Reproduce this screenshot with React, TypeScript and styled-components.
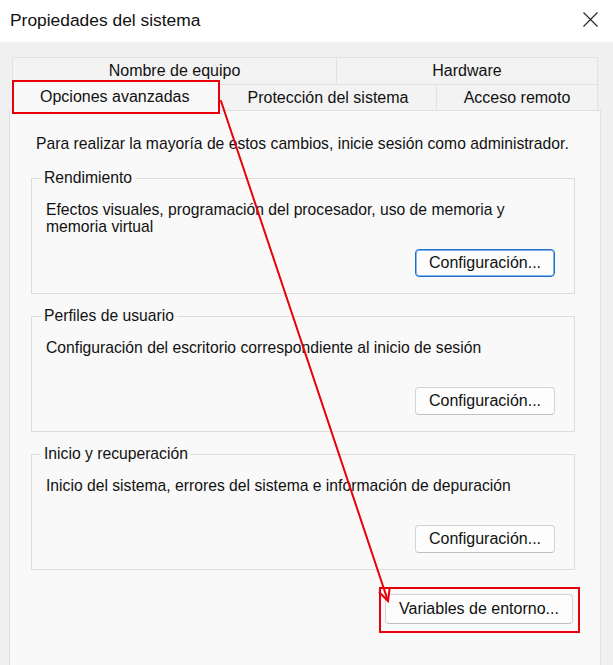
import React from "react";
import styled, { createGlobalStyle, css } from "styled-components";

const GlobalStyle = createGlobalStyle`
  html, body {
    margin: 0;
    padding: 0;
    background: #f0f0f0;
  }
  body {
    font-family: "Liberation Sans", Arial, sans-serif;
    color: #111;
  }
  * { box-sizing: border-box; }
`;

const Window = styled.div`
  position: relative;
  width: 613px;
  height: 665px;
  overflow: hidden;
  display: flex;
  flex-direction: column;
  background: #f0f0f0;
`;

const TitleBar = styled.div`
  height: 42px;
  flex: 0 0 42px;
  background: #ffffff;
  display: flex;
  align-items: center;
  justify-content: space-between;
  padding: 0 15px 2px 10px;
`;

const Title = styled.span`
  font-size: 17.4px;
  color: #111;
`;

const CloseButton = styled.span`
  display: flex;
  width: 16px;
  height: 16px;
  align-items: center;
  justify-content: center;
  margin-bottom: 2px;
`;

const Body = styled.div`
  flex: 1;
  display: flex;
  flex-direction: column;
  padding: 15px 12px 0 9px;
`;

const TabStrip = styled.div`
  display: flex;
  flex-direction: column;
  margin-left: 3px;
  width: 586px;
  position: relative;
  z-index: 2;
`;

const TabRow = styled.div<{ $height: number }>`
  display: flex;
  align-items: flex-end;
  height: ${(p) => p.$height}px;
`;

const redBox = css`
  &::after {
    content: "";
    position: absolute;
    border: 2px solid #e8000b;
    pointer-events: none;
  }
`;

const Tab = styled.div<{ $width: number; $selected?: boolean }>`
  position: relative;
  flex: 0 0 ${(p) => p.$width}px;
  height: 100%;
  display: flex;
  align-items: center;
  justify-content: center;
  font-size: 16px;
  color: #111;
  background: #f3f3f3;
  border: 1px solid #e2e2e2;
  border-bottom: none;
  & + & {
    border-left: none;
  }
  ${(p) =>
    p.$selected &&
    css`
      height: 31px;
      margin-bottom: -1px;
      background: #f9f9f9;
      border-color: #dedede;
      padding-top: 2px;
      z-index: 3;
      justify-content: flex-start;
      padding-left: 27px;
      ${redBox}
      &::after {
        top: -1px;
        left: -1px;
        right: -1px;
        bottom: -3px;
      }
    `}
`;

const Panel = styled.div`
  flex: 1;
  display: flex;
  flex-direction: column;
  background: #f9f9f9;
  border: 1px solid #e0e0e0;
  border-bottom: none;
  padding: 24px 25px 0 21px;
`;

const Intro = styled.p`
  margin: 0 0 0 5px;
  font-size: 15.7px;
  line-height: 17px;
  white-space: nowrap;
`;

const GroupBox = styled.fieldset`
  margin: 13px 0 0 0;
  border: 1px solid #dcdcdc;
  padding: 0 19px 16px 14px;
  min-width: 0;
  &:first-of-type {
    margin-top: 17px;
  }
`;

const Legend = styled.legend`
  margin-left: -5px;
  padding: 0 3px;
  font-size: 15.7px;
  line-height: 18px;
`;

const Description = styled.p`
  margin: 14px 0 0 0;
  font-size: 15.7px;
  line-height: 17px;
  min-height: 34px;
`;

const ButtonRow = styled.div<{ $top: number; $right?: number }>`
  display: flex;
  justify-content: flex-end;
  margin-top: ${(p) => p.$top}px;
  margin-right: ${(p) => p.$right ?? 0}px;
`;

const Button = styled.button<{ $width: number; $height: number; $focused?: boolean; $highlight?: boolean }>`
  position: relative;
  width: ${(p) => p.$width}px;
  height: ${(p) => p.$height}px;
  font-family: "Liberation Sans", Arial, sans-serif;
  font-size: 16px;
  color: #111;
  background: #fdfdfd;
  border: 1px solid #d3d3d3;
  border-bottom-color: #bfbfbf;
  border-radius: 4px;
  padding: 0;
  ${(p) =>
    p.$focused &&
    css`
      border: 1px solid #1d6fcc;
      box-shadow: inset 0 0 0 1px rgba(40, 120, 210, 0.55);
    `}
  ${(p) =>
    p.$highlight &&
    css`
      ${redBox}
      &::after {
        top: -8px;
        left: -7px;
        right: -8px;
        bottom: -10px;
      }
    `}
`;

const ArrowLayer = styled.svg`
  position: absolute;
  left: 0;
  top: 0;
  pointer-events: none;
  z-index: 10;
`;

const groups = [
  {
    title: "Rendimiento",
    text: "Efectos visuales, programación del procesador, uso de memoria y memoria virtual",
    focused: true,
  },
  {
    title: "Perfiles de usuario",
    text: "Configuración del escritorio correspondiente al inicio de sesión",
  },
  {
    title: "Inicio y recuperación",
    text: "Inicio del sistema, errores del sistema e información de depuración",
  },
];

export default function App() {
  return (
    <>
      <GlobalStyle />
      <Window>
        <TitleBar>
          <Title>Propiedades del sistema</Title>
          <CloseButton>
            <svg width="15" height="15" viewBox="0 0 15 15">
              <path d="M0.5 0.5 L14.5 14.5 M14.5 0.5 L0.5 14.5" stroke="#222" strokeWidth="1.1" fill="none" />
            </svg>
          </CloseButton>
        </TitleBar>
        <Body>
          <TabStrip>
            <TabRow $height={27}>
              <Tab $width={325}>Nombre de equipo</Tab>
              <Tab $width={261}>Hardware</Tab>
            </TabRow>
            <TabRow $height={26}>
              <Tab $width={208} $selected>
                Opciones avanzadas
              </Tab>
              <Tab $width={217}>Protección del sistema</Tab>
              <Tab $width={161}>Acceso remoto</Tab>
            </TabRow>
          </TabStrip>
          <Panel>
            <Intro>Para realizar la mayoría de estos cambios, inicie sesión como administrador.</Intro>
            {groups.map((g) => (
              <GroupBox key={g.title}>
                <Legend>{g.title}</Legend>
                <Description>{g.text}</Description>
                <ButtonRow $top={14}>
                  <Button $width={140} $height={28} $focused={g.focused}>
                    Configuración...
                  </Button>
                </ButtonRow>
              </GroupBox>
            ))}
            <ButtonRow $top={24} $right={2}>
              <Button $width={188} $height={30} $highlight>
                Variables de entorno...
              </Button>
            </ButtonRow>
          </Panel>
        </Body>
        <ArrowLayer width={613} height={665} viewBox="0 0 613 665">
          <g stroke="#e8000b" strokeWidth="2" fill="none" strokeLinecap="round">
            <path d="M221 101 L388 601" />
            <path d="M379.5 592.5 L388 601 L389.5 589.5" />
          </g>
        </ArrowLayer>
      </Window>
    </>
  );
}
